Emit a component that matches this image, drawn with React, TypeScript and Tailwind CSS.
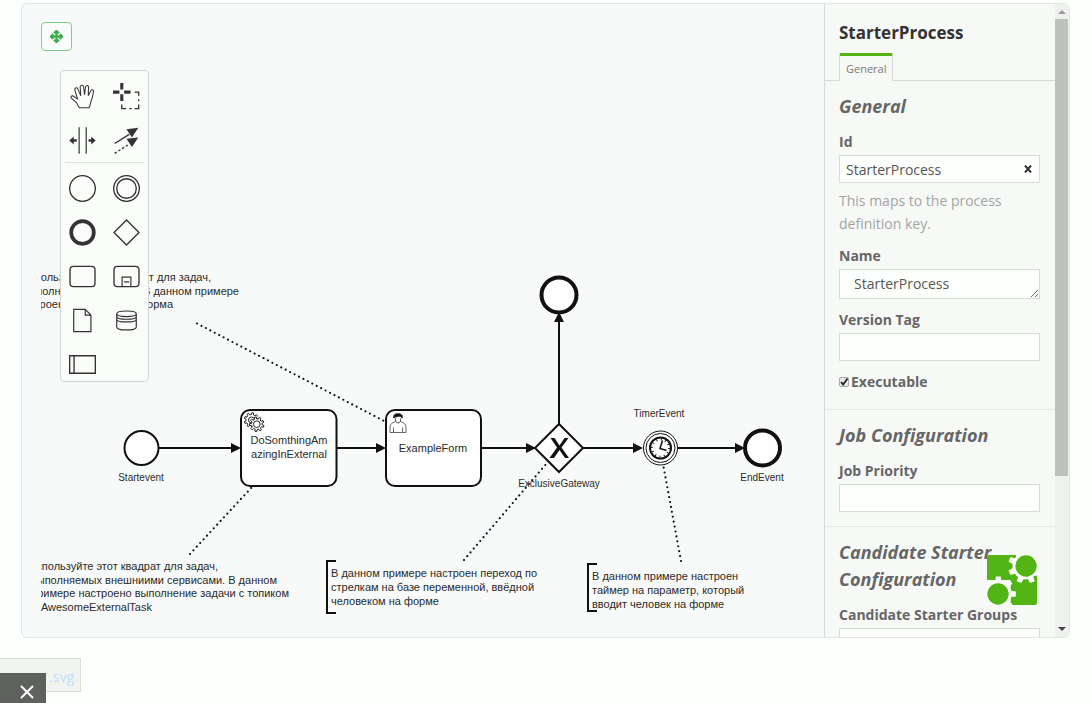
import React from "react";
import { FaArrowsAlt } from "react-icons/fa";

function gearPath(cx: number, cy: number, inner: number, outer: number, teeth: number, turn = 0) {
  const step = (Math.PI * 2) / teeth;
  const points: string[] = [];
  for (let i = 0; i < teeth; i++) {
    const a = i * step + turn;
    const corners: [number, number][] = [
      [inner, -0.28],
      [outer, -0.18],
      [outer, 0.18],
      [inner, 0.28],
    ];
    for (const [r, k] of corners) {
      points.push(`${(cx + r * Math.cos(a + k * step)).toFixed(2)} ${(cy + r * Math.sin(a + k * step)).toFixed(2)}`);
    }
  }
  return `M${points.join("L")}Z`;
}

const tools: { name: string; art: React.ReactNode }[] = [
  {
    name: "Hand tool",
    art: (
      <path
        d="M30 73L22 58L7 45Q3 38 11 38L25 47L17 20Q18 12 25 15L35 38L33 11Q37 3 43 9L46 35L49 12Q54 4 58 11L57 38L65 22Q70 17 73 23L69 44Q66 50 65 56L60 73Z"
        strokeWidth="3"
      />
    ),
  },
  {
    name: "Lasso tool",
    art: (
      <>
        <path d="M26 0V19M26 33V53M0 27H19M33 27H52" strokeWidth="9" />
        <path d="M64 27H76V38M76 48V54M76 64V76H64M55 76H48M39 76H26V64" strokeWidth="4" />
      </>
    ),
  },
  {
    name: "Space tool",
    art: (
      <>
        <path d="M30 1V79M51 1V79" strokeWidth="3.5" />
        <path d="M10 40H23M58 40H70" strokeWidth="8" />
        <path d="M1 40L14 28V52ZM79 40L66 28V52Z" fill="currentColor" stroke="none" />
      </>
    ),
  },
  {
    name: "Connect tool",
    art: (
      <>
        <path d="M5 49L48 22" strokeWidth="4" />
        <path d="M5 78L46 52" strokeWidth="4" strokeDasharray="7 6" />
        <path d="M75 2L56 31L40 7ZM75 31L56 59L40 35Z" fill="currentColor" stroke="none" />
      </>
    ),
  },
  { name: "Create start event", art: <circle cx="40" cy="40" r="38" strokeWidth="4" /> },
  {
    name: "Create intermediate event",
    art: (
      <>
        <circle cx="40" cy="40" r="38" strokeWidth="4" />
        <circle cx="40" cy="40" r="29" strokeWidth="4" />
      </>
    ),
  },
  { name: "Create end event", art: <circle cx="40" cy="40" r="33.5" strokeWidth="11" /> },
  { name: "Create gateway", art: <path d="M40 3L77 40L40 77L3 40Z" strokeWidth="4" /> },
  { name: "Create task", art: <rect x="3" y="10" width="74" height="60" rx="10" strokeWidth="4" /> },
  {
    name: "Create sub process",
    art: (
      <>
        <rect x="3" y="10" width="74" height="60" rx="10" strokeWidth="4" />
        <path d="M27 70V42H53V70M33 56H48" strokeWidth="3.5" />
      </>
    ),
  },
  {
    name: "Create data object",
    art: <path d="M14 7H48L65 24V73H14ZM48 7V24H65" strokeWidth="3.5" />,
  },
  {
    name: "Create data store",
    art: (
      <path
        d="M11 20V59C11 71 69 71 69 59V20C69 9 11 9 11 20C11 31 69 31 69 20M11 28C11 39 69 39 69 28M11 36C11 47 69 47 69 36"
        strokeWidth="3.5"
      />
    ),
  },
  { name: "Create pool", art: <path d="M2 14H78V66H2ZM15 14V66" strokeWidth="4" /> },
];

function Palette() {
  const button = (tool: { name: string; art: React.ReactNode }) => (
    <button key={tool.name} type="button" aria-label={tool.name} className="flex h-[43px] items-center justify-center">
      <svg viewBox="0 0 80 80" className="h-[27px] w-[27px] text-[#333]" fill="none" stroke="currentColor">
        {tool.art}
      </svg>
    </button>
  );
  return (
    <div className="absolute top-[66px] left-[38px] h-[312px] w-[89px] rounded-sm border border-[#d4d6d5] bg-[#fafcf9] pt-1">
      <div className="grid grid-cols-2 gap-y-px">{tools.slice(0, 4).map(button)}</div>
      <hr className="mx-1 mb-1 border-[#dfe1df]" />
      <div className="grid grid-cols-2 gap-y-px">{tools.slice(4).map(button)}</div>
    </div>
  );
}

const notes = [
  {
    x: 331,
    y: 577,
    lines: ["В данном примере настроен переход по", "стрелкам на базе переменной, ввёдной", "человеком на форме"],
  },
  {
    x: 592,
    y: 580,
    lines: ["В данном примере настроен", "таймер на параметр, который", "вводит человек на форме"],
  },
];

const clippedNotes = [
  { x: 211, y: 281, text: "Используйте этот квадрат для задач," },
  { x: 239, y: 295, text: "выполняемых людьми. В данном примере" },
  { x: 173, y: 308, text: "настроена простейшая форма" },
  { x: 218, y: 570, text: "Используйте этот квадрат для задач," },
  { x: 277, y: 584, text: "выполняемых внешниими сервисами. В данном" },
  { x: 289, y: 597, text: "примере настроено выполнение задачи с топиком" },
  { x: 152, y: 611, text: "AwesomeExternalTask" },
];

function Diagram() {
  return (
    <svg className="block h-full w-full overflow-hidden font-['Liberation_Sans',Arial,sans-serif]" role="img" aria-label="Process diagram">
      <g transform="translate(-41 -4)">
        <g fill="none" stroke="#111" strokeWidth="2.2" strokeLinecap="round" strokeDasharray="0 5">
          <path d="M197 323.5L386 422" />
          <path d="M190 554L252 487" />
          <path d="M464 560L547 463" />
          <path d="M681 561L663 464" />
        </g>
        <g fill="none" stroke="#111" strokeWidth="2">
          <path d="M159 448H236M336 448H380M481 448H530M582 448H638M677 448H740M559 424V318" />
          <path d="M336 561H327V613H336M597 564H588V611H597" />
        </g>
        <path
          fill="#111"
          d="M241 448L231 443V453ZM386 448L376 443V453ZM536 448L526 443V453ZM643 448L633 443V453ZM745 448L735 443V453ZM559 312L554 322H564Z"
        />
        <g fill="#fdfefd" stroke="#111" strokeWidth="2">
          <circle cx="141.5" cy="448" r="17" />
          <rect x="241" y="410" width="95.5" height="76" rx="9" />
          <rect x="386" y="410" width="95" height="76" rx="9" />
          <path d="M559 424L583 448L559 472L535 448Z" />
          <circle cx="559" cy="295" r="17.5" strokeWidth="4" />
          <circle cx="762.5" cy="448" r="17.5" strokeWidth="4" />
          <circle cx="660.5" cy="448" r="17" strokeWidth="1" />
          <circle cx="660.5" cy="448" r="14.5" strokeWidth="1" />
          <circle cx="660.5" cy="448" r="10.5" strokeWidth="2" />
        </g>
        <path d="M550.5 438H554.5L559.5 445.5L564.5 438H568.5L561.5 447.5L569 458H565L559.5 450L554 458H549.5L557 447.5Z" fill="#111" />
        <circle cx="660.5" cy="448" r="8.5" fill="none" stroke="#111" strokeWidth="2" strokeDasharray="1 3.45" />
        <path d="M662.5 440.5L660 448.5L666.5 450.5" fill="none" stroke="#111" strokeWidth="1.5" />
        <g fill="#fdfefd" stroke="#222" strokeWidth="1">
          <path d={gearPath(251.5, 420, 5.5, 7.3, 9)} />
          <circle cx="251.5" cy="420" r="3" />
          <path d={gearPath(256.8, 424.2, 5.3, 7.3, 9, 0.3)} />
          <circle cx="256.8" cy="424.2" r="3.3" />
        </g>
        <g fill="#fdfefd" stroke="#444" strokeWidth="0.8">
          <path d="M390 432.5V427C390 424 392 423 395.5 421.5Q398 424.5 400.5 421.5C404 423 406 424 406 427V432.5ZM393.5 432V427.5M402.5 432V427.5" />
          <path d="M395.5 421.5V419Q394 417 394 415.5H402Q402 417.5 400.5 419V421.5Q398 424.5 395.5 421.5" />
          <path d="M393.5 418Q393 413.5 398 413.5Q403 413.5 402.5 418Q401 416 398.5 416.5Q395 417 393.5 418Z" fill="#111" />
        </g>
        <g fill="#2b2b2b" className="text-[11px]">
          <text x="289" y="444" textAnchor="middle">DoSomthingAm</text>
          <text x="289" y="458" textAnchor="middle">azingInExternal</text>
          <text x="433" y="452" textAnchor="middle">ExampleForm</text>
          {clippedNotes.map((n) => (
            <text key={n.y} x={n.x} y={n.y} textAnchor="end">{n.text}</text>
          ))}
          {notes.map((n) =>
            n.lines.map((line, i) => (
              <text key={line} x={n.x} y={n.y + i * 14}>{line}</text>
            )),
          )}
        </g>
        <g fill="#2b2b2b" className="text-[10px]" textAnchor="middle">
          <text x="141" y="481">Startevent</text>
          <text x="559" y="487">ExclusiveGateway</text>
          <text x="659" y="417">TimerEvent</text>
          <text x="762" y="481">EndEvent</text>
        </g>
      </g>
    </svg>
  );
}

const labelStyle = "block text-sm leading-[22px] font-bold text-[#666]";
const boxStyle = "block h-7 w-full border border-[#d9dbd9] bg-[#fdfffc] px-1.5 text-sm text-[#555]";

function Field({ id, label, children }: { id: string; label: string; children?: React.ReactNode }) {
  return (
    <div className="mt-2.5">
      <label htmlFor={id} className={labelStyle}>{label}</label>
      <div className="mt-0.5">{children ?? <input id={id} type="text" className={boxStyle} />}</div>
    </div>
  );
}

function Group({ title, children }: { title: string; children: React.ReactNode }) {
  return (
    <section className="border-b border-[#e6e8e6] pt-3 pr-[15px] pb-3.5 pl-3.5">
      <h2 className="pb-px text-lg leading-[27px] font-bold text-[#666] italic">{title}</h2>
      {children}
    </section>
  );
}

function Properties() {
  return (
    <aside className="flex w-[245px] shrink-0 border-l border-[#d8dad8] bg-[#f7f9f7]">
      <div className="min-w-0 flex-1 overflow-hidden">
        <h1 className="px-3.5 pt-[17px] text-[17px] leading-6 font-bold text-[#333]">StarterProcess</h1>
        <div className="mt-2 flex border-b border-[#d8dad8] px-3.5">
          <button type="button" className="-mb-px h-7 rounded-t-xs border border-t-3 border-[#d8dad8] border-t-[#52b415] border-b-[#f7f9f7] bg-[#f7f9f7] px-1.5 pt-0.5 text-[11px] text-[#777]">
            General
          </button>
        </div>
        <Group title="General">
          <Field id="process-id" label="Id">
            <div className="relative">
              <input id="process-id" type="text" defaultValue="StarterProcess" className={boxStyle} />
              <button type="button" aria-label="Clear id" className="absolute top-0 right-0 flex h-7 w-6 items-center justify-center">
                <svg viewBox="0 0 8 8" className="h-2 w-2" stroke="#333" strokeWidth="2">
                  <path d="M1 0.5L7 7.5M7 0.5L1 7.5" />
                </svg>
              </button>
            </div>
            <p className="mt-1.5 text-sm leading-[23px] text-[#a3a5a3]">This maps to the process definition key.</p>
          </Field>
          <Field id="process-name" label="Name">
            <textarea
              id="process-name"
              defaultValue="StarterProcess"
              className="block h-[30px] w-full resize-y overflow-hidden border border-[#d9dbd9] bg-[#fdfffc] px-3.5 pt-1 text-sm text-[#555]"
            />
          </Field>
          <Field id="version-tag" label="Version Tag" />
          <div className="mt-2.5 flex items-center gap-0.5">
            <span className="relative flex h-2.5 w-2.5">
              <input id="executable" type="checkbox" defaultChecked className="h-2.5 w-2.5 appearance-none rounded-xs border border-[#aaa] bg-[#e6e8e6]" />
              <svg viewBox="0 0 10 10" className="pointer-events-none absolute inset-0" fill="none" stroke="#222" strokeWidth="1.8">
                <path d="M2 5L4.2 7.5L8.5 1.5" />
              </svg>
            </span>
            <label htmlFor="executable" className={labelStyle}>Executable</label>
          </div>
          <div className="h-0.5" />
        </Group>
        <Group title="Job Configuration">
          <Field id="job-priority" label="Job Priority" />
        </Group>
        <Group title="Candidate Starter Configuration">
          <Field id="starter-groups" label="Candidate Starter Groups" />
        </Group>
      </div>
      <div className="flex w-3.5 shrink-0 flex-col bg-[#eff1ef]">
        <button type="button" aria-label="Scroll up" className="flex h-[15px] shrink-0 items-center justify-center">
          <svg viewBox="0 0 8 4" className="h-1 w-2"><path d="M0 4L4 0L8 4Z" fill="#999" /></svg>
        </button>
        <div className="flex-1">
          <div className="mr-px h-[76%] bg-[#bfc1bf]" />
        </div>
        <button type="button" aria-label="Scroll down" className="flex h-[17px] shrink-0 items-center justify-center">
          <svg viewBox="0 0 8 4" className="h-1 w-2"><path d="M0 0L4 4L8 0Z" fill="#444" /></svg>
        </button>
      </div>
    </aside>
  );
}

function EngineLogo() {
  return (
    <svg viewBox="0 0 150 150" className="absolute right-8 bottom-8 h-[50px] w-[50px]" role="img" aria-label="bpmn.io">
      <path d="M6 0H88V62H150V144Q150 150 144 150H71V75H0V6Q0 0 6 0Z" fill="#52b415" />
      <path d="M88 0H150V40H88ZM0 90H40V150H0Z" fill="#fcfffc" />
      <path d={gearPath(116, 33, 40, 53, 8, 0.39)} fill="#fcfffc" />
      <path d={gearPath(34, 117, 40, 53, 8)} fill="#fcfffc" />
      <circle cx="117" cy="33" r="32" fill="#52b415" />
      <circle cx="33" cy="117" r="32" fill="#52b415" />
    </svg>
  );
}

export default function App() {
  return (
    <main className="flex h-screen flex-col overflow-hidden bg-[#fdfffc] pt-[3px] pr-[22px] pl-[21px] font-['Open_Sans','Noto_Sans',sans-serif]">
      <div className="relative flex min-h-0 flex-1 overflow-hidden rounded-md border border-[#e4e6e4] bg-[#f8faf9]">
        <div className="relative min-w-0 flex-1 pl-[19px]">
          <Diagram />
          <button
            type="button"
            aria-label="Toggle full view"
            className="absolute top-[18px] left-[19px] flex h-[29px] w-[31px] items-center justify-center rounded-sm border border-[#7fcb90] bg-[#fafcfa] text-[#37ad4b]"
          >
            <FaArrowsAlt size={13} strokeWidth={30} />
          </button>
          <Palette />
        </div>
        <Properties />
        <EngineLogo />
      </div>
      <footer className="-ml-[21px] h-[65px] shrink-0 pt-5">
        <a
          href="#download"
          className="flex h-[34px] w-[81px] items-center justify-end border border-l-0 border-[#dcdedc] bg-[#f2f4f2] pt-1 pr-1.5 text-sm text-[#c3dff8]"
        >
          .svg
        </a>
      </footer>
      <button type="button" aria-label="Close" className="fixed bottom-0 left-0 flex h-[30px] w-[46px] items-center justify-center bg-[#5f615f] pt-2 pl-2">
        <svg viewBox="0 0 14 14" className="h-3.5 w-3.5" stroke="#fff" strokeWidth="2">
          <path d="M1 1L13 13M13 1L1 13" />
        </svg>
      </button>
    </main>
  );
}
